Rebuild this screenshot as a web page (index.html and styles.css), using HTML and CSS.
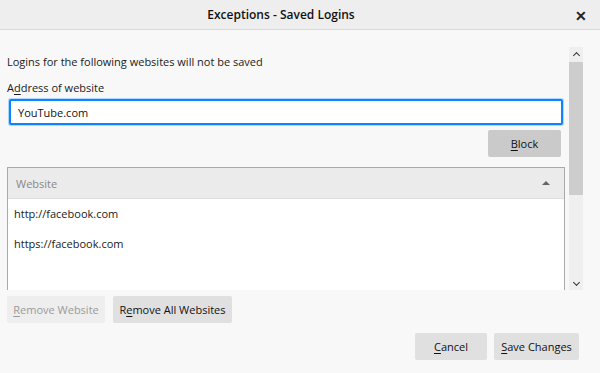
FILE: index.html
```html
<!DOCTYPE html>
<html lang="en">
<head>
    <meta charset="UTF-8">
    <title>Exceptions - Saved Logins</title>
    <link rel="stylesheet" href="styles.css">
</head>
<body>
    <div class="titlebar">
        <span class="title">Exceptions - Saved Logins</span>
        <span class="close">&#x2715;</span>
    </div>

    <div class="main">
        <div class="pane">
            <p class="intro">Logins for the following websites will not be saved</p>
            <label class="field-label" for="urlInput">A<u>d</u>dress of website</label>
            <input type="text" id="urlInput" class="url-input" value="YouTube.com">
            <div class="block-row">
                <button class="btn btn-block"><u>B</u>lock</button>
            </div>
            <div class="site-table">
                <div class="table-head">
                    <span>Website</span>
                    <span class="sort-arrow"></span>
                </div>
                <div class="table-body">
                    <div class="table-row">http://facebook.com</div>
                    <div class="table-row">https://facebook.com</div>
                </div>
            </div>
        </div>
        <div class="scrollbar">
            <span class="arrow arrow-up"></span>
            <span class="thumb"></span>
            <span class="track"></span>
            <span class="arrow arrow-down"></span>
        </div>
    </div>

    <div class="remove-row">
        <button class="btn btn-disabled"><u>R</u>emove Website</button>
        <button class="btn btn-remove-all">R<u>e</u>move All Websites</button>
    </div>

    <div class="footer">
        <button class="btn btn-cancel"><u>C</u>ancel</button>
        <button class="btn btn-save"><u>S</u>ave Changes</button>
    </div>
</body>
</html>
```

FILE: styles.css
```css
* {
    margin: 0;
    padding: 0;
    box-sizing: border-box;
}

body {
    font-family: 'Open Sans', 'Noto Sans', sans-serif;
    font-size: 11px;
    background: #f8f8f8;
    color: #1a1a1a;
    width: 600px;
    height: 373px;
    overflow: hidden;
}

u {
    text-decoration-thickness: 1px;
    text-underline-offset: 2px;
}

.titlebar {
    height: 30px;
    background: #eeeeee;
    border-bottom: 1px solid #d9d9d9;
    display: flex;
    align-items: center;
    justify-content: center;
    position: relative;
}

.title {
    font-size: 12px;
    font-weight: 600;
    color: #111;
    margin-left: -38px;
}

.close {
    position: absolute;
    right: 13px;
    top: 6px;
    font-size: 14px;
    font-weight: 700;
    color: #222;
}

.main {
    display: flex;
    margin-top: 17px;
    height: 243px;
}

.pane {
    flex: 1;
    overflow: hidden;
    padding: 7px 4px 0 7px;
}

.intro {
    line-height: 16px;
}

.field-label {
    display: block;
    line-height: 16px;
    margin-top: 10px;
}

.url-input {
    display: block;
    width: calc(100% - 4px);
    margin: 3px 0 0 2px;
    height: 26px;
    border: 2px solid #0a84ff;
    border-radius: 2px;
    box-shadow: 0 0 0 1px rgba(10, 132, 255, 0.3);
    padding: 0 7px;
    font-family: inherit;
    font-size: 11px;
    color: #111;
    background: #fff;
    outline: none;
}

.block-row {
    display: flex;
    justify-content: flex-end;
    margin-top: 5px;
    padding-right: 4px;
}

.btn {
    height: 27px;
    padding: 0;
    border: none;
    border-radius: 2px;
    background: #e0e0e0;
    font-family: inherit;
    font-size: 11px;
    color: #111;
    white-space: nowrap;
    text-align: center;
}

.btn-block {
    width: 73px;
    background: #cacaca;
}

.site-table {
    margin-top: 10px;
    border: 1px solid #a9a9a9;
    border-bottom: none;
    background: #fff;
    height: 140px;
}

.table-head {
    height: 31px;
    background: #ebebeb;
    border-bottom: 1px solid #dedede;
    display: flex;
    align-items: center;
    justify-content: space-between;
    padding: 0 14px 0 8px;
    color: #888;
}

.sort-arrow {
    width: 0;
    height: 0;
    border-left: 4px solid transparent;
    border-right: 4px solid transparent;
    border-bottom: 4px solid #666;
}

.table-row {
    height: 30px;
    line-height: 30px;
    padding-left: 6px;
}

.scrollbar {
    width: 14px;
    margin-right: 17px;
    background: #efefef;
    display: flex;
    flex-direction: column;
    align-items: center;
}

.arrow {
    height: 14px;
    width: 14px;
    display: flex;
    align-items: center;
    justify-content: center;
}

.arrow::before {
    content: '';
    width: 4px;
    height: 4px;
    border-left: 1.5px solid #333;
    border-top: 1.5px solid #333;
}

.arrow-up::before {
    transform: translateY(1px) rotate(45deg);
}

.arrow-down::before {
    transform: translateY(-1px) rotate(225deg);
}

.thumb {
    width: 14px;
    height: 133px;
    background: #cdcdcd;
    margin-top: 1px;
}

.track {
    flex: 1;
}

.remove-row {
    display: flex;
    gap: 8px;
    padding: 6px 0 0 7px;
}

.btn-disabled {
    width: 98px;
    background: #eeeeee;
    color: #9a9a9a;
}

.btn-remove-all {
    width: 119px;
}

.footer {
    display: flex;
    justify-content: flex-end;
    gap: 7px;
    padding: 10px 21px 0 0;
}

.btn-cancel {
    width: 72px;
}

.btn-save {
    width: 85px;
}
```
